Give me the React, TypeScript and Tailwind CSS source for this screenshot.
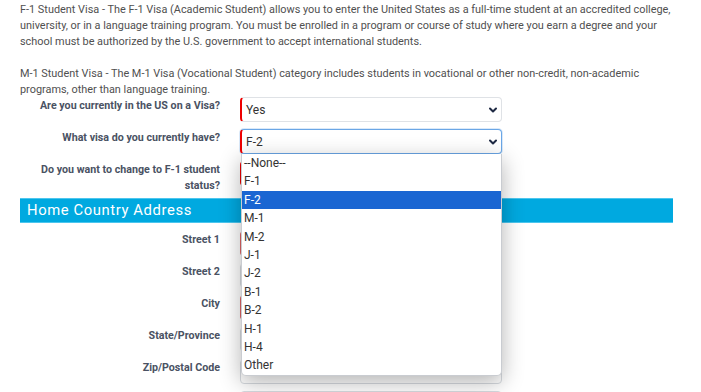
import React from 'react';

const visaOptions = ['--None--', 'F-1', 'F-2', 'M-1', 'M-2', 'J-1', 'J-2', 'B-1', 'B-2', 'H-1', 'H-4', 'Other'];

const Chevron: React.FC = () => (
  <svg width="8" height="6" viewBox="0 0 8 6" className="shrink-0">
    <path d="M1 1.5l3 3 3-3" fill="none" stroke="#1f2a44" strokeWidth="2" strokeLinecap="round" strokeLinejoin="round" />
  </svg>
);

const SelectBox: React.FC<{ value?: string; focused?: boolean; required?: boolean }> = ({ value, focused, required }) => (
  <div
    className={`h-[25px] w-[262px] flex items-center justify-between pl-[4px] pr-[4px] rounded-[4px] border bg-white text-[12px] text-[#333] ${
      focused ? 'border-[#6aa6e6] shadow-[0_0_0_1px_rgba(106,166,230,0.25)]' : 'border-[#dfe2e6]'
    } ${required ? 'border-l-2 border-l-[#e00]' : ''}`}
  >
    <span>{value}</span>
    <Chevron />
  </div>
);

const InputBox: React.FC<{ required?: boolean }> = ({ required }) => (
  <div
    className={`h-[25px] w-[262px] rounded-[4px] border border-[#d7dbe0] bg-white ${required ? 'border-l-2 border-l-[#e06666]' : ''}`}
  />
);

const Row: React.FC<{ label: string; children: React.ReactNode }> = ({ label, children }) => (
  <div className="flex items-start mb-[7px]">
    <div className="w-[220px] pl-[20px] text-right text-[10.7px] leading-4 font-bold text-[#4a5263] pt-[1px]">{label}</div>
    <div className="ml-[20px]">{children}</div>
  </div>
);

const App: React.FC = () => {
  return (
    <div className="relative w-[701px] h-[392px] overflow-hidden bg-white font-['Roboto',sans-serif]">
      <div className="px-5 pt-[2px] text-[10.9px] leading-4 text-[#505050]">
        <p>
          F-1 Student Visa - The F-1 Visa (Academic Student) allows you to enter the United States as a full-time student at an accredited college,
          university, or in a language training program. You must be enrolled in a program or course of study where you earn a degree and your
          school must be authorized by the U.S. government to accept international students.
        </p>
        <p className="mt-4">
          M-1 Student Visa - The M-1 Visa (Vocational Student) category includes students in vocational or other non-credit, non-academic
          programs, other than language training.
        </p>
      </div>

      <div className="mt-[-1px]">
        <Row label="Are you currently in the US on a Visa?">
          <SelectBox value="Yes" required />
        </Row>
        <Row label="What visa do you currently have?">
          <SelectBox value="F-2" focused required />
        </Row>
        <Row label="Do you want to change to F-1 student status?">
          <SelectBox required />
        </Row>
      </div>

      <div className="ml-5 w-[653px] mt-[-3px] h-[25px] flex items-center pl-[7px] bg-[#00a9e0] border-y border-[#4cc6ee] text-white text-[14.8px] tracking-[0.6px]">
        Home Country Address
      </div>

      <div className="mt-[8px]">
        <Row label="Street 1">
          <InputBox required />
        </Row>
        <Row label="Street 2">
          <InputBox />
        </Row>
        <Row label="City">
          <InputBox required />
        </Row>
        <Row label="State/Province">
          <InputBox />
        </Row>
        <Row label="Zip/Postal Code">
          <InputBox />
        </Row>
        <Row label="">
          <InputBox />
        </Row>
      </div>

      <ul className="absolute left-[241px] top-[154px] w-[261px] bg-white border border-[#c9ccd1] border-t-0 rounded-b-[5px] shadow-[0_6px_22px_rgba(0,0,0,0.3)] text-[12px] text-[#333] overflow-hidden">
        {visaOptions.map((opt) => (
          <li
            key={opt}
            className={`h-[18.4px] leading-[19px] pl-[2px] ${opt === 'F-2' ? 'bg-[#1a66d2] text-white' : ''}`}
          >
            {opt}
          </li>
        ))}
      </ul>
    </div>
  );
};

export default App;
